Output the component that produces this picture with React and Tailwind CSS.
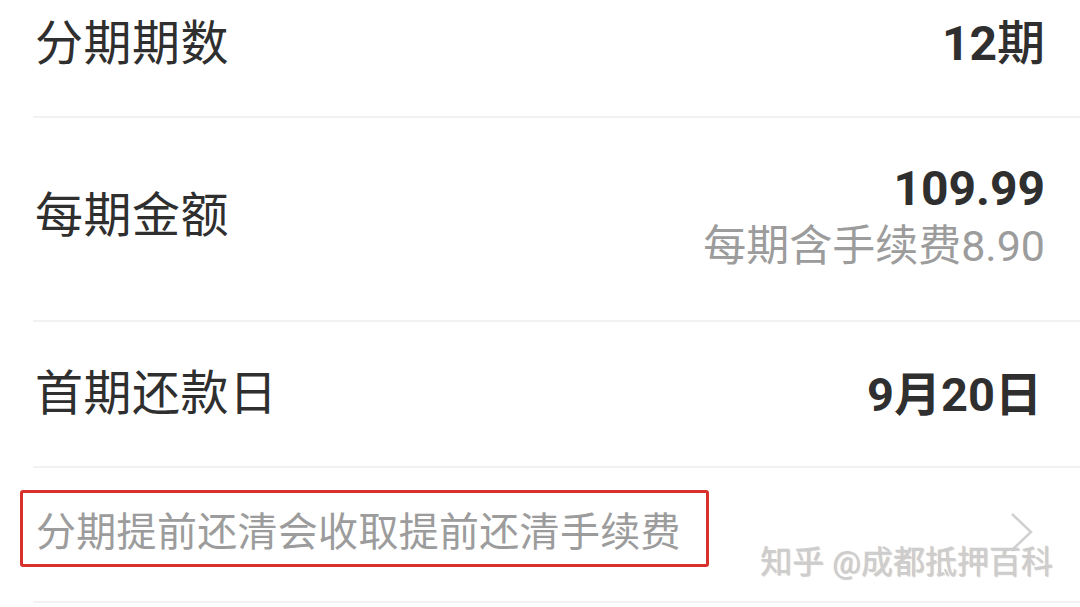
import React from "react";

const font = { fontFamily: 'Roboto, "Noto Sans CJK SC", "Noto Sans", sans-serif' };

function Divider() {
  return <div className="ml-[33px] h-[2px] bg-[#f2f2f2]" />;
}

export default function App() {
  return (
    <div
      className="w-[1080px] h-[607px] overflow-hidden bg-white text-[#2f2f2f] flex flex-col"
      style={font}
    >
      {/* Row 1 */}
      <div className="h-[116px] flex items-start justify-between pt-[20px] pl-[35px] pr-[35px]">
        <span className="text-[48px] leading-none tracking-[0.5px]">分期期数</span>
        <span className="text-[48px] leading-none font-bold">
          12<span className="font-medium">期</span>
        </span>
      </div>
      <Divider />

      {/* Row 2 */}
      <div className="h-[202px] flex items-center justify-between pl-[35px] pr-[35px] pb-[6px]">
        <span className="text-[48px] leading-none tracking-[0.5px]">每期金额</span>
        <div className="flex flex-col items-end gap-[12px]">
          <span className="text-[48px] leading-none font-bold">109.99</span>
          <span className="text-[43px] leading-none text-[#9c9c9c]">每期含手续费8.90</span>
        </div>
      </div>
      <Divider />

      {/* Row 3 */}
      <div className="h-[144px] flex items-center justify-between pl-[35px] pr-[38px]">
        <span className="text-[48px] leading-none tracking-[0.5px]">首期还款日</span>
        <span className="text-[47px] leading-none font-bold">9月20日</span>
      </div>
      <Divider />

      {/* Row 4 */}
      <div className="relative h-[133px] flex items-center justify-between pl-[36px] pr-[45px] pb-[4px]">
        <span className="text-[40px] leading-none tracking-[0.3px] text-[#9c9c9c]">
          分期提前还清会收取提前还清手续费
        </span>
        <svg width="26" height="42" viewBox="0 0 26 42" className="-mt-[2px]">
          <path d="M3 3 L22 21 L3 39" fill="none" stroke="#d0d0d0" strokeWidth="2.5" />
        </svg>
        <div className="absolute left-[20px] top-[22px] w-[689px] h-[77px] border-[3px] border-[#d8312b] rounded-[3px]" />
        <div className="absolute left-[760px] top-[78px] text-[32px] leading-none text-[#cdcdcd] [text-shadow:1px_1px_1px_rgba(0,0,0,0.2)] whitespace-nowrap">
          知乎 @成都抵押百科
        </div>
      </div>
      <Divider />
    </div>
  );
}
